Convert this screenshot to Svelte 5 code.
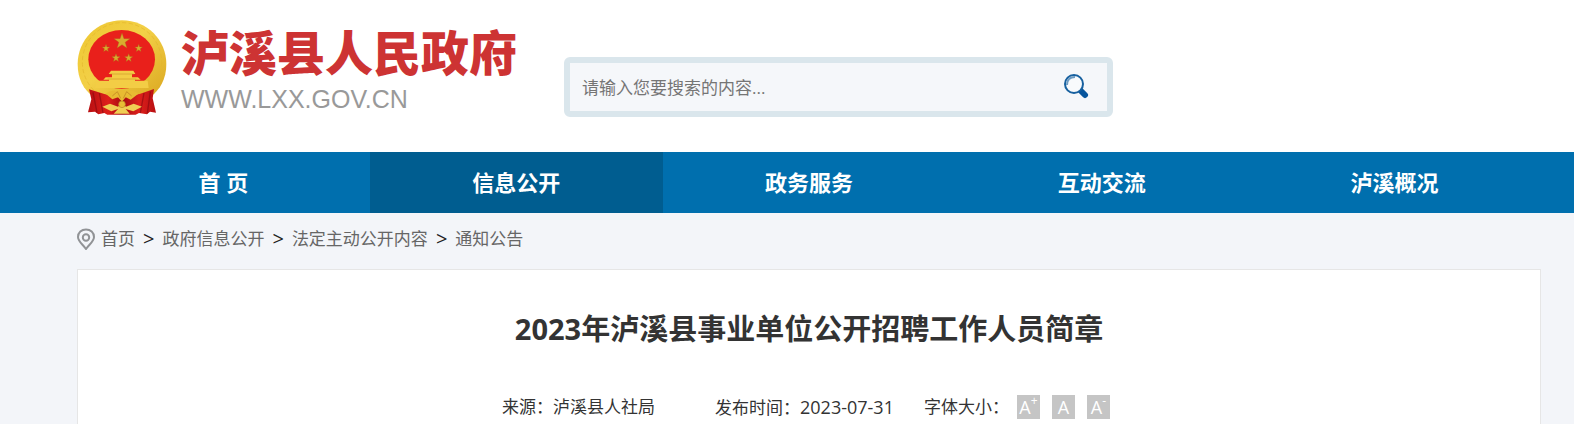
<script lang="ts">
  const nav = ["首 页", "信息公开", "政务服务", "互动交流", "泸溪概况"];
  const crumbs = ["首页", "政府信息公开", "法定主动公开内容", "通知公告"];
  const sizes = [
    { sign: "+", label: "放大字体" },
    { sign: "", label: "默认字体" },
    { sign: "-", label: "缩小字体" },
  ];

  let active = $state(1);
  let keyword = $state("");

  // five-pointed star, centre x/y and outer radius
  function star(x: number, y: number, r: number) {
    const pts = [];
    for (let i = 0; i < 10; i++) {
      const a = (Math.PI / 5) * i - Math.PI / 2;
      const d = i % 2 ? r * 0.4 : r;
      pts.push(`${(x + d * Math.cos(a)).toFixed(1)},${(y + d * Math.sin(a)).toFixed(1)}`);
    }
    return pts.join(" ");
  }
</script>

<div class="page">
  <header>
    <a class="logo" href="#home">
      <svg class="emblem" viewBox="21 28 268 288" aria-hidden="true">
        <defs>
          <linearGradient id="gold" x1="0" y1="0" x2="1" y2="1">
            <stop offset="0" stop-color="#edc62f" />
            <stop offset="0.45" stop-color="#f3d047" />
            <stop offset="1" stop-color="#d9a51e" />
          </linearGradient>
          <linearGradient id="drape" x1="0" y1="0" x2="1" y2="0">
            <stop offset="0" stop-color="#b80f12" />
            <stop offset="0.3" stop-color="#de1f1b" />
            <stop offset="0.5" stop-color="#a50c10" />
            <stop offset="0.75" stop-color="#dd201c" />
            <stop offset="1" stop-color="#b80f12" />
          </linearGradient>
        </defs>
        <path d="M155 29C230 29 288 88 288 160C288 205 269 237 242 257L155 273L68 257C40 237 22 205 22 160C22 88 80 29 155 29Z" fill="url(#gold)" />
        <circle cx="155" cy="155" r="119" fill="none" stroke="#e3b52e" stroke-width="2" stroke-dasharray="13 7" />
        <ellipse cx="154" cy="146" rx="100" ry="88" fill="#e9201b" />
        <g fill="#d8ac2e" stroke="#a9661b" stroke-width="1">
          <polygon points={star(155, 92, 25)} />
          <polygon points={star(107, 113, 12)} />
          <polygon points={star(205, 113, 12)} />
          <polygon points={star(137, 142, 13)} />
          <polygon points={star(175, 142, 13)} />
        </g>
        <path d="M122 180H189L195 190H115ZM125 190H185V200H125ZM106 200H203L211 207H99ZM116 207H194V216H116ZM77 210H232L235 232H74Z" fill="#f3cd45" />
        <path d="M120 190H190M112 205H198" stroke="#cf9a2c" stroke-width="2" />
        <path d="M56 236L102 250L143 260L166 260L210 249L251 235L247 263L257 306L239 303L230 311L206 307L196 312H111L102 307L84 311L74 303L53 305L63 266Z" fill="url(#drape)" />
        <path d="M68 245L80 306M87 247L98 307M221 247L210 307M240 243L231 308" stroke="#850910" stroke-width="4" opacity="0.6" />
        <path d="M106 249Q126 235 139 244Q154 232 171 244Q187 235 204 249L181 267L166 260L155 273L143 260L126 266Z" fill="#e8bb32" />
        <path d="M126 256L141 243L151 263M184 256L169 243L159 263" fill="none" stroke="#b97c20" stroke-width="2" />
        <path d="M96 288L119 279L143 288L154 276L167 288L190 279L215 288L189 302L166 295L178 309H130L143 295L123 302Z" fill="#f0ce54" />
        <circle cx="155" cy="281" r="10" fill="#e8bd36" stroke="#b98322" stroke-width="2" />
      </svg>
      <span class="names">
        <strong>泸溪县人民政府</strong>
        <span class="domain">WWW.LXX.GOV.CN</span>
      </span>
    </a>

    <form class="search" onsubmit={(e) => e.preventDefault()}>
      <input type="text" aria-label="搜索" placeholder="请输入您要搜索的内容..." bind:value={keyword} />
      <button type="submit" aria-label="搜索">
        <svg width="26" height="26" viewBox="0 0 26 26">
          <path d="M18 17L22 21" stroke="#07559d" stroke-width="6" stroke-linecap="round" />
          <circle cx="11" cy="10" r="9" fill="#f8fafc" stroke="#17609f" stroke-width="2" />
          <path d="M4 11C4 6 7 3 12 3" fill="none" stroke="#6d9bc2" stroke-width="2" />
        </svg>
      </button>
    </form>
  </header>

  <nav>
    {#each nav as item, i}
      <a href="#nav" class:active={active === i} onclick={() => (active = i)}>{item}</a>
    {/each}
  </nav>

  <main>
    <div class="crumbs">
      <svg width="18" height="22" viewBox="0 0 18 22" fill="none" stroke="#919396" aria-hidden="true">
        <path d="M9 21C6 16.500 1 13.500 1 9C1 4.500 4.500 1.500 9 1.500S17 4.500 17 9C17 13.500 12 16.500 9 21Z" stroke-width="2" />
        <circle cx="9" cy="9.500" r="3.200" stroke-width="2" />
      </svg>
      {#each crumbs as crumb, i}
        {#if i > 0}<span>&gt;</span>{/if}
        <a href="#crumb">{crumb}</a>
      {/each}
    </div>

    <article>
      <h1>2023年泸溪县事业单位公开招聘工作人员简章</h1>
      <div class="meta">
        <span class="source">来源：泸溪县人社局</span>
        <span class="date">发布时间：<time datetime="2023-07-31">2023-07-31</time></span>
        <span>字体大小：</span>
        <div class="sizes">
          {#each sizes as size}
            <button type="button" aria-label={size.label}>A{#if size.sign}<sup>{size.sign}</sup>{/if}</button>
          {/each}
        </div>
      </div>
    </article>
  </main>
</div>

<style>
  :global(body) {
    margin: 0;
  }

  .page {
    min-height: 100vh;
    display: flex;
    flex-direction: column;
    font-family: "Open Sans", "Noto Sans CJK SC", sans-serif;
    font-size: 17px;
    color: #333;
    background: #f3f5f9;
  }

  a {
    color: inherit;
    text-decoration: none;
  }

  header,
  nav,
  main {
    padding: 0 33px 0 77px;
  }

  header {
    display: flex;
    align-items: flex-start;
    gap: 47px;
    padding-top: 20px;
    padding-bottom: 35px;
    background: #fff;
  }

  .logo {
    display: flex;
    gap: 14px;
  }

  .emblem {
    width: 90px;
    height: 96px;
  }

  .names {
    display: flex;
    flex-direction: column;
    gap: 7px;
    padding-top: 4px;
  }

  .names strong {
    font-family: "Noto Sans CJK SC", sans-serif;
    font-size: 48px;
    font-weight: 900;
    line-height: 52px;
    color: #cd3333;
    white-space: nowrap;
  }

  .domain {
    font-family: "Liberation Sans", Arial, sans-serif;
    font-size: 25px;
    line-height: 32px;
    color: #999;
  }

  .search {
    flex: 0 1 537px;
    display: flex;
    height: 48px;
    margin-top: 37px;
    border: 6px solid #dae6ec;
    border-radius: 6px;
    background: #f5f7fa;
  }

  .search input {
    flex: 1;
    min-width: 0;
    padding: 0 12px;
    border: 0;
    outline: 0;
    background: none;
    font: inherit;
  }

  .search input::placeholder {
    color: #757575;
  }

  .search button {
    display: flex;
    align-items: center;
    padding: 0 18px;
    border: 0;
    background: none;
    cursor: pointer;
  }

  nav {
    display: grid;
    grid-template-columns: repeat(5, 1fr);
    background: #006fae;
  }

  nav a {
    font-size: 22px;
    font-weight: bold;
    line-height: 61px;
    text-align: center;
    color: #fff;
  }

  nav a.active {
    background: #005d90;
  }

  main {
    flex: 1;
    display: flex;
    flex-direction: column;
  }

  .crumbs {
    display: flex;
    align-items: center;
    gap: 6px;
    height: 52px;
    padding-bottom: 4px;
    line-height: 24px;
    color: #222;
  }

  .crumbs a {
    color: #666;
  }

  .crumbs span {
    font-size: 20px;
    padding: 0 2px;
  }

  article {
    flex: 1;
    padding: 39px 0 5px;
    border: 1px solid #e6e6e6;
    border-bottom: 0;
    background: #fff;
  }

  h1 {
    margin: 0 0 46px;
    font-size: 29px;
    line-height: 40px;
    text-align: center;
  }

  .meta {
    display: flex;
    justify-content: center;
    padding-right: 6px;
    line-height: 24px;
  }

  .source {
    margin-right: 60px;
  }

  .date {
    margin-right: 30px;
  }

  .date time {
    font-size: 18px;
  }

  .sizes {
    display: flex;
    gap: 12px;
    margin-left: 8px;
  }

  .sizes button {
    display: flex;
    justify-content: center;
    width: 23px;
    height: 24px;
    padding: 0;
    border: 0;
    background: #c5c5c5;
    color: #fff;
    font-family: inherit;
    font-size: 18px;
    line-height: 24px;
    cursor: pointer;
  }

  .sizes sup {
    font-size: 12px;
    line-height: 12px;
  }
</style>
